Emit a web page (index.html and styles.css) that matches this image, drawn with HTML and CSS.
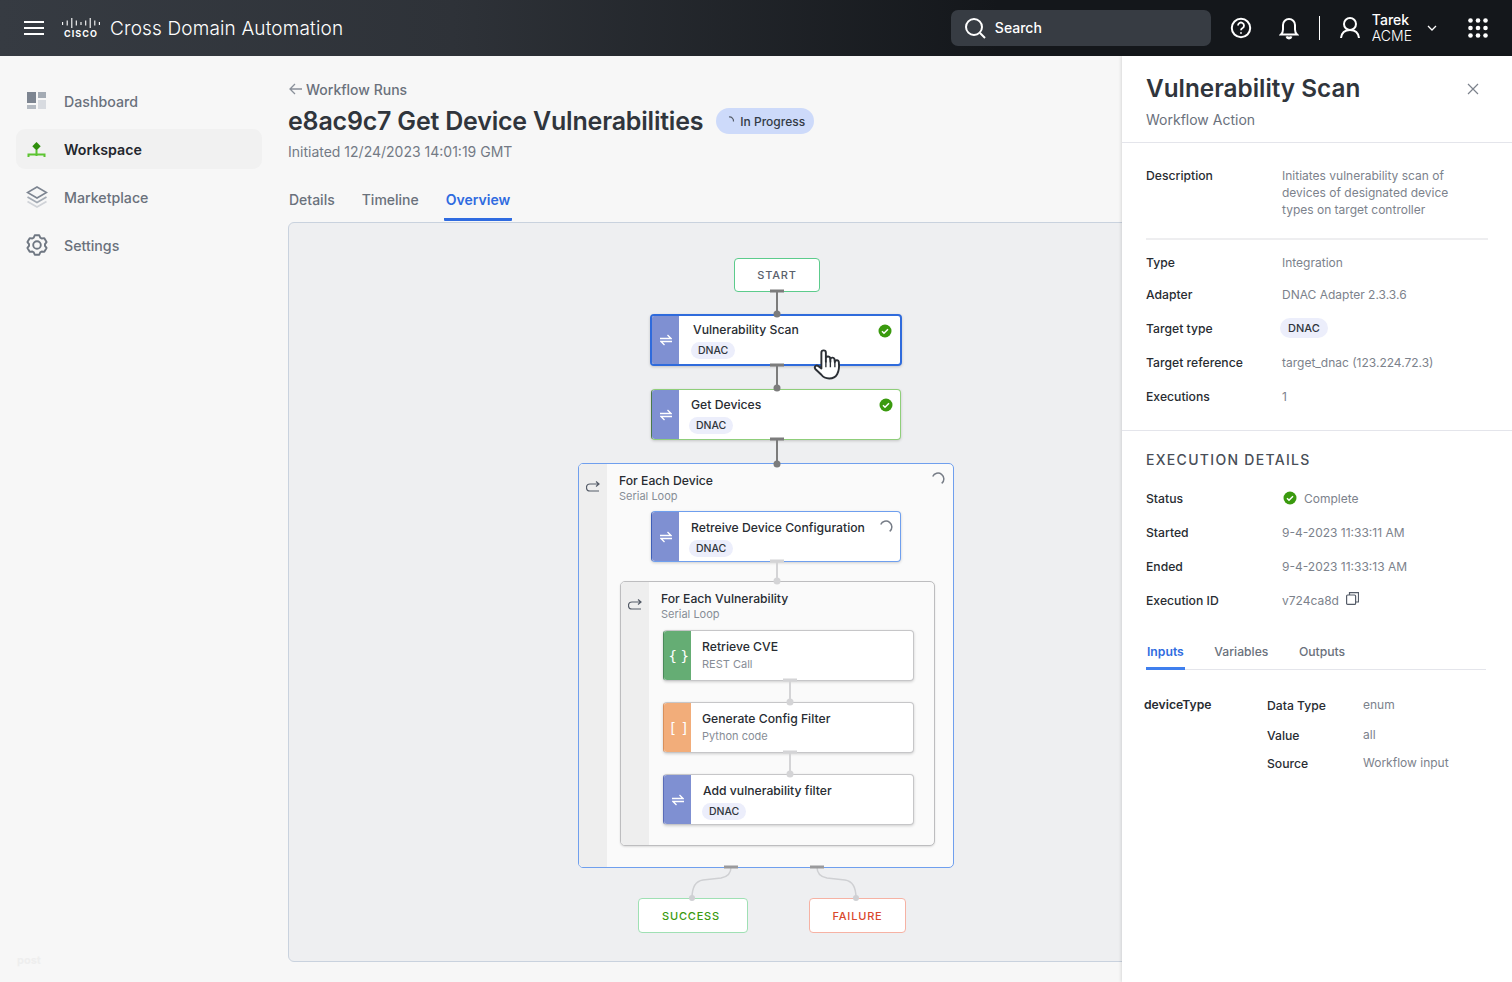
FILE: index.html
```html
<!doctype html>
<html>
  <head>
    <meta charset="UTF-8" />
    <title>Cross Domain Automation</title>
    <link rel="stylesheet" href="styles.css">
  </head>
  <body>
    <header class="top-bar">
      <svg class="menu-icon" width="20" height="14" viewBox="0 0 20 14"><path d="M0 1h20M0 7h20M0 13h20" stroke="#fff" stroke-width="2"/></svg>
      <div class="logo">
        <svg width="38" height="10" viewBox="0 0 38 10"><path d="M.6 4v3M5.200 2.500v5M9.800 0v10M14.300 2.500v5M19 4v3M23.700 2.500v5M28.200 0v10M32.800 2.500v5M37.400 4v3" stroke="#fff" stroke-width="1.100" fill="none"/></svg>
        <span class="logo-text">CISCO</span>
      </div>
      <div class="app-name">Cross Domain Automation</div>
      <div class="search">
        <svg width="24" height="24" viewBox="0 0 24 24" fill="none" stroke="#fff" stroke-width="2"><circle cx="11" cy="11" r="8"/><path d="M17 17l5 5"/></svg>
        <span>Search</span>
      </div>
      <svg class="help-icon" width="22" height="22" viewBox="0 0 22 22" fill="none" stroke="#fff" stroke-width="2"><circle cx="11" cy="11" r="9.200"/><path d="M8 8.600a3 3 0 1 1 4.600 2.500c-1 .6-1.600 1.100-1.600 2.200" stroke-width="1.800"/><circle cx="11" cy="16" r=".6" stroke-width="1"/></svg>
      <svg class="bell-icon" width="20" height="24" viewBox="0 0 20 24" fill="none" stroke="#fff" stroke-width="2"><path d="M2 18.500h16c-1.400-1.400-2-3-2-5V9a6 6 0 0 0-12 0v4.500c0 2-.6 3.600-2 5z"/><path d="M7.500 20.500a2.600 2.600 0 0 0 5 0" fill="#fff"/></svg>
      <div class="bar-divider"></div>
      <svg class="user-icon" width="22" height="24" viewBox="0 0 22 24" fill="none" stroke="#fff" stroke-width="2"><circle cx="11" cy="8" r="6"/><path d="M2 22c.6-5 3.600-8 9-8s8.400 3 9 8"/></svg>
      <div class="user-name"><div>Tarek</div><div>ACME</div></div>
      <svg class="caret" width="10" height="6" viewBox="0 0 10 6" fill="none" stroke="#fff" stroke-width="1.300"><path d="M1 1l4 4 4-4"/></svg>
      <svg class="grid-icon" width="20" height="20" viewBox="0 0 20 20" fill="#fff"><circle cx="2.500" cy="2.500" r="2.300"/><circle cx="10" cy="2.500" r="2.300"/><circle cx="17.500" cy="2.500" r="2.300"/><circle cx="2.500" cy="10" r="2.300"/><circle cx="10" cy="10" r="2.300"/><circle cx="17.500" cy="10" r="2.300"/><circle cx="2.500" cy="17.500" r="2.300"/><circle cx="10" cy="17.500" r="2.300"/><circle cx="17.500" cy="17.500" r="2.300"/></svg>
    </header>

    <div class="layout">
      <nav class="sidebar">
        <a class="nav-item">
          <svg width="22" height="18" viewBox="0 0 22 18"><rect x="1" y="0" width="9" height="11" fill="#7d8591"/><rect x="12" y="0" width="8" height="6" fill="#a4abb4"/><rect x="1" y="13" width="9" height="4" fill="#b4bac2"/><rect x="12" y="8" width="8" height="9" fill="#d8dbe0"/></svg>
          Dashboard
        </a>
        <a class="nav-item active">
          <svg width="22" height="18" viewBox="0 0 22 18"><path d="M10.500 2l4.200 4.200-4.200 4.200-4.200-4.200z" fill="#2f8f0c"/><path d="M10.500 10v6M2.500 17v-2.500h16V17" stroke="#5cc431" stroke-width="2" fill="none"/></svg>
          Workspace
        </a>
        <a class="nav-item">
          <svg width="22" height="24" viewBox="0 0 22 24" fill="none"><path d="M11 2l9.500 5.500L11 13 1.500 7.500z" stroke="#7d8591" stroke-width="1.600"/><path d="M1.500 12L11 17.500 20.500 12" stroke="#a4abb4" stroke-width="1.800"/><path d="M1.500 16.500L11 22l9.500-5.500" stroke="#d0d3d8" stroke-width="1.800"/></svg>
          Marketplace
        </a>
        <a class="nav-item">
          <svg width="22" height="22" viewBox="0 0 22 22" fill="none" stroke="#6f7782" stroke-width="1.900" stroke-linejoin="round"><circle cx="11" cy="11" r="3.800"/><path d="M7.750 3.690L8.750 1.260H13.250L14.250 3.690 15.700 4.530 18.310 4.180 20.560 8.080 18.960 10.160V11.840L20.560 13.920 18.310 17.820 15.700 17.470 14.250 18.310 13.250 20.740H8.750L7.750 18.310 6.300 17.470 3.690 17.820 1.440 13.920 3.040 11.840V10.160L1.440 8.080 3.690 4.180 6.300 4.530z"/></svg>
          Settings
        </a>
        <div class="sidebar-foot">post</div>
      </nav>

      <main class="main">
        <a class="back-link">
          <svg width="14" height="12" viewBox="0 0 14 12" fill="none" stroke="#8a909a" stroke-width="1.300"><path d="M13 6H1.500M6 1L1 6l5 5"/></svg>
          Workflow Runs
        </a>
        <div class="title-row">
          <h1>e8ac9c7 Get Device Vulnerabilities</h1>
          <span class="status-badge">
            <svg width="10" height="10" viewBox="0 0 10 10" fill="none" stroke="#555c68" stroke-width="1.200"><path d="M3 1a4 4 0 0 1 4.500 4.500"/></svg>
            In Progress
          </span>
        </div>
        <div class="initiated">Initiated 12/24/2023 14:01:19 GMT</div>
        <div class="tabs">
          <a class="tab">Details</a>
          <a class="tab">Timeline</a>
          <a class="tab active">Overview</a>
        </div>

        <div class="canvas">
          <div class="node terminal n-start">START</div>

          <div class="node n-vuln">
            <div class="node-side side-blue">
              <svg class="swap" width="12" height="12" viewBox="0 0 12 12" fill="none" stroke="#fff" stroke-width="1.300"><path d="M0 4.500h11L7.500 1M12 7.500H1L4.500 11"/></svg>
            </div>
            <div class="node-body">
              <div class="node-title">Vulnerability Scan</div>
              <span class="chip">DNAC</span>
            </div>
            <svg class="node-status" width="14" height="14" viewBox="0 0 14 14"><circle cx="7" cy="7" r="6.500" fill="#3a9a0e"/><path d="M4 7.200l2 2 4-4" stroke="#fff" stroke-width="1.500" fill="none"/></svg>
          </div>

          <div class="node n-get">
            <div class="node-side side-blue">
              <svg class="swap" width="12" height="12" viewBox="0 0 12 12" fill="none" stroke="#fff" stroke-width="1.300"><path d="M0 4.500h11L7.500 1M12 7.500H1L4.500 11"/></svg>
            </div>
            <div class="node-body">
              <div class="node-title">Get Devices</div>
              <span class="chip">DNAC</span>
            </div>
            <svg class="node-status" width="14" height="14" viewBox="0 0 14 14"><circle cx="7" cy="7" r="6.500" fill="#3a9a0e"/><path d="M4 7.200l2 2 4-4" stroke="#fff" stroke-width="1.500" fill="none"/></svg>
          </div>

          <div class="loop n-loop-outer">
            <div class="loop-side">
              <svg width="14" height="11" viewBox="0 0 14 11" fill="none" stroke="#555c68" stroke-width="1.200"><path d="M13 3H4a3.200 3.200 0 0 0 0 7h9M10 .5L13 3l-3 2.500"/></svg>
            </div>
            <div class="loop-head">
              <div class="node-title">For Each Device</div>
              <div class="node-sub">Serial Loop</div>
            </div>
            <svg class="loop-status" width="14" height="14" viewBox="0 0 14 14" fill="none" stroke="#777d87" stroke-width="1.500"><path d="M1.740 4.550A5.800 5.800 0 1 1 10.700 11.400"/></svg>
          </div>

          <div class="node n-retreive">
            <div class="node-side side-blue">
              <svg class="swap" width="12" height="12" viewBox="0 0 12 12" fill="none" stroke="#fff" stroke-width="1.300"><path d="M0 4.500h11L7.500 1M12 7.500H1L4.500 11"/></svg>
            </div>
            <div class="node-body">
              <div class="node-title">Retreive Device Configuration</div>
              <span class="chip">DNAC</span>
            </div>
            <svg class="node-status" width="14" height="14" viewBox="0 0 14 14" fill="none" stroke="#777d87" stroke-width="1.500"><path d="M1.740 4.550A5.800 5.800 0 1 1 10.700 11.400"/></svg>
          </div>

          <div class="loop n-loop-inner">
            <div class="loop-side">
              <svg width="14" height="11" viewBox="0 0 14 11" fill="none" stroke="#555c68" stroke-width="1.200"><path d="M13 3H4a3.200 3.200 0 0 0 0 7h9M10 .5L13 3l-3 2.500"/></svg>
            </div>
            <div class="loop-head">
              <div class="node-title">For Each Vulnerability</div>
              <div class="node-sub">Serial Loop</div>
            </div>
          </div>

          <div class="node n-cve">
            <div class="node-side side-green">{ }</div>
            <div class="node-body">
              <div class="node-title">Retrieve CVE</div>
              <div class="node-sub">REST Call</div>
            </div>
          </div>

          <div class="node n-gen">
            <div class="node-side side-orange">[ ]</div>
            <div class="node-body">
              <div class="node-title">Generate Config Filter</div>
              <div class="node-sub">Python code</div>
            </div>
          </div>

          <div class="node n-add">
            <div class="node-side side-blue">
              <svg class="swap" width="12" height="12" viewBox="0 0 12 12" fill="none" stroke="#fff" stroke-width="1.300"><path d="M0 4.500h11L7.500 1M12 7.500H1L4.500 11"/></svg>
            </div>
            <div class="node-body">
              <div class="node-title">Add vulnerability filter</div>
              <span class="chip">DNAC</span>
            </div>
          </div>

          <div class="node terminal n-success">SUCCESS</div>
          <div class="node terminal n-failure">FAILURE</div>

          <!-- connectors, drawn in page coordinates -->
          <svg class="links" viewBox="289 223 1200 738" width="1200" height="738">
            <g stroke="#7c7c7c" fill="#7c7c7c">
              <path d="M777 291v22M777 365v22M777 439v24" stroke-width="2" fill="none"/>
              <path d="M770 291h14M770 365h14M770 439h14" stroke-width="3"/>
              <circle cx="777" cy="314" r="3.500" stroke="none"/>
              <circle cx="777" cy="388" r="3.500" stroke="none"/>
              <circle cx="777" cy="464" r="3.500" stroke="none"/>
            </g>
            <g stroke="#d4d4d6" fill="#d4d4d6">
              <path d="M777 561v20M790 680v22M790 752v22" stroke-width="2" fill="none"/>
              <path d="M770 561h14M783 680h14M783 752h14" stroke-width="3"/>
              <circle cx="777" cy="581" r="3.500" stroke="none"/>
              <circle cx="790" cy="702" r="3.500" stroke="none"/>
              <circle cx="790" cy="774" r="3.500" stroke="none"/>
            </g>
            <path d="M731 867c0 7-4 10-10 11l-18 2c-7 1-11 6-11 18M817 867c0 7 4 10 10 11l18 2c7 1 11 6 11 18" stroke="#cfd0d3" stroke-width="1.500" fill="none"/>
            <path d="M724 867h14M810 867h14" stroke="#9a9a9c" stroke-width="3"/>
            <circle cx="692" cy="898" r="3" fill="#cfd0d3"/>
            <circle cx="856" cy="898" r="3" fill="#cfd0d3"/>
          </svg>

          <svg class="hand" width="30" height="36" viewBox="0 0 26 32">
            <path d="M8 19V5a2 2 0 0 1 4 0v8l0-3a2 2 0 0 1 3.700-.6l.3 3.600 0-2a1.900 1.900 0 0 1 3.600-.4l.4 3 .2-1a1.800 1.800 0 0 1 3.300.6c.4 3.600.2 8-1.500 11-1.400 2.600-3.600 3.800-7 3.800-3.200 0-5.400-1-7-3.300L2.600 19.500c-1.300-2 .9-4 2.800-2.500z" fill="#fff" stroke="#2b2f35" stroke-width="1.700" stroke-linejoin="round"/>
            <path d="M12 13v5M16 13v5M20 14v4" stroke="#2b2f35" stroke-width="1.200"/>
          </svg>
        </div>
      </main>

      <aside class="panel">
        <div class="panel-head">
          <div>
            <h2>Vulnerability Scan</h2>
            <div class="panel-sub">Workflow Action</div>
          </div>
          <svg class="close-icon" width="12" height="12" viewBox="0 0 12 12" stroke="#7c828c" stroke-width="1.200"><path d="M1 1l10 10M11 1L1 11"/></svg>
        </div>

        <div class="panel-section first">
          <div class="desc-row">
            <div class="field-label">Description</div>
            <div class="field-value">Initiates vulnerability scan of devices of designated device types on target controller</div>
          </div>
          <div class="field-row"><div class="field-label">Type</div><div class="field-value">Integration</div></div>
          <div class="field-row"><div class="field-label">Adapter</div><div class="field-value">DNAC Adapter 2.3.3.6</div></div>
          <div class="field-row"><div class="field-label">Target type</div><div class="field-value"><span class="chip">DNAC</span></div></div>
          <div class="field-row"><div class="field-label">Target reference</div><div class="field-value">target_dnac (123.224.72.3)</div></div>
          <div class="field-row"><div class="field-label">Executions</div><div class="field-value">1</div></div>
        </div>

        <div class="panel-section">
          <h3>EXECUTION DETAILS</h3>
          <div class="field-row">
            <div class="field-label">Status</div>
            <div class="field-value status-value">
              <svg class="status-check" width="14" height="14" viewBox="0 0 14 14"><circle cx="7" cy="7" r="6.500" fill="#3a9a0e"/><path d="M4 7.200l2 2 4-4" stroke="#fff" stroke-width="1.500" fill="none"/></svg>
              Complete
            </div>
          </div>
          <div class="field-row"><div class="field-label">Started</div><div class="field-value">9-4-2023 11:33:11 AM</div></div>
          <div class="field-row"><div class="field-label">Ended</div><div class="field-value">9-4-2023 11:33:13 AM</div></div>
          <div class="field-row">
            <div class="field-label">Execution ID</div>
            <div class="field-value status-value">
              v724ca8d
              <svg class="copy-icon" width="13" height="13" viewBox="0 0 13 13" fill="none" stroke="#555c68" stroke-width="1.200"><rect x=".6" y="3" width="9" height="9.400" rx="1"/><path d="M3.500 3V.6h9v9.400H9.600"/></svg>
            </div>
          </div>

          <div class="sub-tabs">
            <a class="sub-tab active">Inputs</a>
            <a class="sub-tab">Variables</a>
            <a class="sub-tab">Outputs</a>
          </div>

          <div class="input-block">
            <div class="input-name">deviceType</div>
            <div class="input-fields">
              <div class="input-row row-type"><div class="field-label">Data Type</div><div class="field-value">enum</div></div>
              <div class="input-row row-value"><div class="field-label">Value</div><div class="field-value">all</div></div>
              <div class="input-row"><div class="field-label">Source</div><div class="field-value">Workflow input</div></div>
            </div>
          </div>
        </div>
      </aside>
    </div>
  </body>
</html>
```

FILE: styles.css
```css
* {
  box-sizing: border-box;
}

body,
html {
  height: 100%;
  margin: 0;
}

body {
  display: flex;
  flex-direction: column;
  font-family: Inter, "Noto Sans", sans-serif;
  background: #f7f7f7;
  color: #30353c;
  overflow: hidden;
}

svg {
  display: block;
  flex: none;
}

/* top bar */
.top-bar {
  height: 56px;
  flex: none;
  display: flex;
  align-items: center;
  padding: 0 24px;
  color: #fff;
  background: linear-gradient(90deg, #363b42 0%, #2e3238 30%, #14171b 66%, #14171b 100%);
}

.logo {
  margin-left: 18px;
  display: flex;
  flex-direction: column;
  align-items: center;
  gap: 1px;
}

.logo-text {
  font-size: 9px;
  line-height: 9px;
  font-weight: 700;
  letter-spacing: 1.100px;
}

.app-name {
  margin-left: 10px;
  font-size: 19px;
  font-weight: 300;
  letter-spacing: 0.15px;
}

.search {
  margin-left: auto;
  width: 260px;
  height: 36px;
  background: #373c43;
  border-radius: 7px;
  display: flex;
  align-items: center;
  gap: 8px;
  padding: 0 12px;
  font-size: 14px;
  font-weight: 500;
}

.search span {
  margin-top: -2px;
}

.help-icon {
  margin-left: 19px;
}

.bell-icon {
  margin-left: 27px;
}

.bar-divider {
  width: 1px;
  height: 24px;
  background: #fff;
  margin-left: 20px;
}

.user-icon {
  margin-left: 19px;
}

.user-name {
  margin-left: 11px;
  font-size: 14px;
  line-height: 16px;
}

.user-name div:first-child {
  font-weight: 500;
}

.user-name div:last-child {
  font-weight: 300;
}

.caret {
  margin-left: 15px;
}

.grid-icon {
  margin-left: 31px;
}

/* page columns */
.layout {
  flex: 1;
  min-height: 0;
  display: flex;
}

.sidebar {
  width: 288px;
  flex: none;
  padding: 25px 26px 15px 16px;
  display: flex;
  flex-direction: column;
  gap: 8px;
}

.nav-item {
  height: 40px;
  display: flex;
  align-items: center;
  gap: 16px;
  padding: 0 10px;
  border-radius: 9px;
  font-size: 14.200px;
  font-weight: 500;
  color: #6a717c;
}

.nav-item.active {
  background: #f1f1f1;
  color: #23272d;
  font-weight: 600;
}

.sidebar-foot {
  margin-top: auto;
  font-size: 11px;
  font-weight: 700;
  color: #eeeeee;
  padding-left: 1px;
}

.main {
  flex: 1;
  min-width: 0;
  overflow: hidden;
  padding: 24px 0 20px;
  display: flex;
  flex-direction: column;
}

.back-link {
  display: flex;
  align-items: center;
  gap: 3px;
  height: 18px;
  padding-left: 1px;
  font-size: 14px;
  font-weight: 500;
  color: #6a717c;
}

.title-row {
  display: flex;
  align-items: center;
  gap: 13px;
  margin-top: 8px;
  height: 30px;
}

h1 {
  margin: 0;
  font-size: 25px;
  line-height: 30px;
  font-weight: 600;
  letter-spacing: -0.2px;
  white-space: nowrap;
  color: #30353c;
}

.status-badge {
  display: flex;
  align-items: center;
  gap: 4px;
  height: 26px;
  padding: 0 9px 0 10px;
  border-radius: 13px;
  background: #cddafa;
  font-size: 12px;
  font-weight: 500;
  color: #333a45;
}

.initiated {
  margin-top: 7px;
  font-size: 14px;
  line-height: 18px;
  color: #737a85;
}

.tabs {
  display: flex;
  margin-top: 20px;
  height: 41px;
  flex: none;
}

.tab {
  padding: 10px 1px 0;
  margin-right: 25px;
  height: 40px;
  font-size: 14px;
  font-weight: 500;
  color: #6a717c;
}

.tab.active {
  margin-left: -1px;
  padding: 10px 2px 0;
  color: #2f6be0;
  font-weight: 600;
  border-bottom: 3px solid #2f6be0;
  border-radius: 0 0 1px 1px;
}

/* workflow diagram */
.canvas {
  position: relative;
  width: 1200px;
  flex: 1;
  min-height: 0;
  background: #eeeff1;
  border: 1px solid #c9d2de;
  border-radius: 6px;
}

.links {
  position: absolute;
  left: 0;
  top: 0;
  pointer-events: none;
}

.hand {
  position: absolute;
  left: 523px;
  top: 124px;
}

.node {
  position: absolute;
  display: flex;
  background: #fff;
  border: 1px solid #c6c6c8;
  border-radius: 4px;
  overflow: hidden;
  box-shadow: 0 1px 3px rgba(0, 0, 0, 0.18);
}

.node-side {
  width: 27px;
  flex: none;
  display: flex;
  align-items: center;
  justify-content: center;
  color: #fff;
  font-family: "DejaVu Sans Mono", monospace;
  font-size: 14px;
  white-space: nowrap;
  letter-spacing: -2.500px;
}

.side-blue {
  background: #7f90d2;
}

.side-green {
  background: #65ad74;
}

.side-orange {
  background: #f2ad7a;
}

.node-body {
  padding: 7px 12px 0;
}

.node-title {
  font-size: 12.200px;
  line-height: 16px;
  font-weight: 500;
  color: #282c32;
  white-space: nowrap;
}

.node-sub {
  font-size: 11px;
  line-height: 14px;
  color: #878d96;
  white-space: nowrap;
}

.node-status {
  position: absolute;
  right: 7px;
  top: 8px;
}

.chip {
  display: inline-block;
  height: 17px;
  line-height: 17px;
  padding: 0 7px;
  border-radius: 9px;
  background: #eceefb;
  font-size: 10.500px;
  font-weight: 500;
  color: #30353c;
}

.node-body .chip {
  margin-top: 2px;
  margin-left: -2px;
}

.terminal {
  align-items: center;
  justify-content: center;
  font-size: 11px;
  font-weight: 500;
  letter-spacing: 0.8px;
  box-shadow: none;
}

.n-start {
  left: 445px;
  top: 35px;
  width: 86px;
  height: 34px;
  border-color: #5ccb8c;
  color: #5a616c;
}

.n-success {
  left: 349px;
  top: 675px;
  width: 110px;
  height: 35px;
  padding-right: 4px;
  border-color: #9fe0b4;
  color: #3a9a0e;
}

.n-failure {
  left: 520px;
  top: 675px;
  width: 97px;
  height: 35px;
  border-color: #f6b2a4;
  color: #d9472b;
}

.n-vuln {
  left: 361px;
  top: 91px;
  width: 252px;
  height: 52px;
  border: 2px solid #2f6bdc;
}

.n-vuln .node-body {
  padding: 6px 14px 0;
}

.n-vuln .node-status {
  right: 8px;
}

.n-vuln .node-body .chip {
  margin-top: 3px;
}

.n-get {
  left: 362px;
  top: 166px;
  width: 250px;
  height: 51px;
  border-color: #8fce7a;
  border-left-color: #4a7a4a;
}

.n-retreive {
  left: 362px;
  top: 288px;
  width: 250px;
  height: 51px;
  border-color: #6f9fee;
  border-left-color: #3f5fb8;
}

.n-retreive .node-body {
  padding-top: 8px;
}

.n-retreive .node-body .chip {
  margin-top: 1px;
}

.n-cve,
.n-gen,
.n-add {
  left: 374px;
  width: 251px;
  height: 51px;
}

.n-cve {
  top: 407px;
  border-left-color: #4a8a5a;
}

.n-gen {
  top: 479px;
  border-left-color: #d8905c;
}

.n-add {
  top: 551px;
  border-left-color: #5a6cb8;
}

.n-cve .node-body,
.n-gen .node-body {
  padding: 8px 11px 0;
}

.n-cve .node-sub,
.n-gen .node-sub {
  margin-top: 2px;
}

.n-add .node-body {
  padding-top: 8px;
}

.n-add .node-body .chip {
  margin-left: -1px;
}

.loop {
  position: absolute;
  display: flex;
  background: #fafafa;
  border-radius: 5px;
  overflow: hidden;
}

.n-loop-outer {
  left: 289px;
  top: 240px;
  width: 376px;
  height: 405px;
  border: 1px solid #6f9fee;
}

.n-loop-inner {
  left: 331px;
  top: 358px;
  width: 315px;
  height: 265px;
  border: 1px solid #bdbdbf;
  box-shadow: 0 1px 2px rgba(0, 0, 0, 0.12);
}

.loop-side {
  width: 28px;
  flex: none;
  background: #eeeeee;
  padding: 17px 0 0 7px;
}

.loop-head {
  padding: 9px 12px 0;
}

.loop-status {
  position: absolute;
  right: 8px;
  top: 8px;
}

/* right panel */
.panel {
  width: 390px;
  flex: none;
  background: #fff;
  box-shadow: -1px 0 3px rgba(0, 0, 0, 0.12);
  z-index: 2;
}

.panel-head {
  height: 87px;
  padding: 17px 24px 0;
  display: flex;
  justify-content: space-between;
  border-bottom: 1px solid #e4e5eb;
}

h2 {
  margin: 0;
  font-size: 24.300px;
  line-height: 30px;
  font-weight: 600;
  color: #30353c;
}

.panel-sub {
  margin-top: 8px;
  font-size: 14px;
  line-height: 18px;
  color: #6a717c;
}

.close-icon {
  margin: 10px 9px 0 0;
}

.panel-section {
  padding: 20px 24px 0;
}

.panel-section.first {
  height: 288px;
  padding-top: 24px;
  border-bottom: 1px solid #e4e5eb;
}

.desc-row {
  display: flex;
  padding-bottom: 20px;
  margin-bottom: 7px;
  border-bottom: 2px solid #eeeef0;
}

.field-row {
  display: flex;
  align-items: center;
  height: 34px;
}

.desc-row + .field-row {
  height: 30px;
}

.field-label {
  width: 136px;
  flex: none;
  font-size: 12.200px;
  line-height: 17px;
  font-weight: 500;
  color: #282c32;
}

.field-value {
  font-size: 12px;
  line-height: 17px;
  color: #7c828c;
  width: 180px;
}

.field-value .chip {
  display: block;
  width: fit-content;
  margin-left: -2px;
  height: 20px;
  line-height: 20px;
  padding: 0 8px;
  border-radius: 10px;
  font-size: 11px;
}

.status-value {
  display: flex;
  align-items: center;
  gap: 7px;
}

.status-check {
  margin-left: 1px;
}

.copy-icon {
  margin-top: -3px;
}

h3 {
  margin: 0 0 12px;
  font-size: 14px;
  line-height: 18px;
  font-weight: 500;
  letter-spacing: 1.300px;
  color: #484e57;
}

.sub-tabs {
  display: flex;
  margin-top: 17px;
  width: 340px;
  height: 36px;
  border-bottom: 1px solid #e4e5eb;
}

.sub-tab {
  padding: 10px 1px 0;
  margin-right: 28.500px;
  font-size: 12.200px;
  font-weight: 500;
  color: #6a717c;
}

.sub-tab.active {
  color: #2f6be0;
  font-weight: 600;
  border-bottom: 3px solid #3f7fee;
  height: 36px;
}

.input-block {
  display: flex;
  margin-top: 26px;
  margin-left: -2px;
}

.input-name {
  width: 123px;
  flex: none;
  font-size: 12.200px;
  line-height: 17px;
  font-weight: 600;
  color: #282c32;
}

.input-row {
  display: flex;
}

.input-row .field-label {
  width: 96px;
  padding-top: 1px;
  line-height: 17px;
}

.row-type {
  margin-bottom: 12px;
}

.row-value {
  margin-bottom: 10px;
}
```
